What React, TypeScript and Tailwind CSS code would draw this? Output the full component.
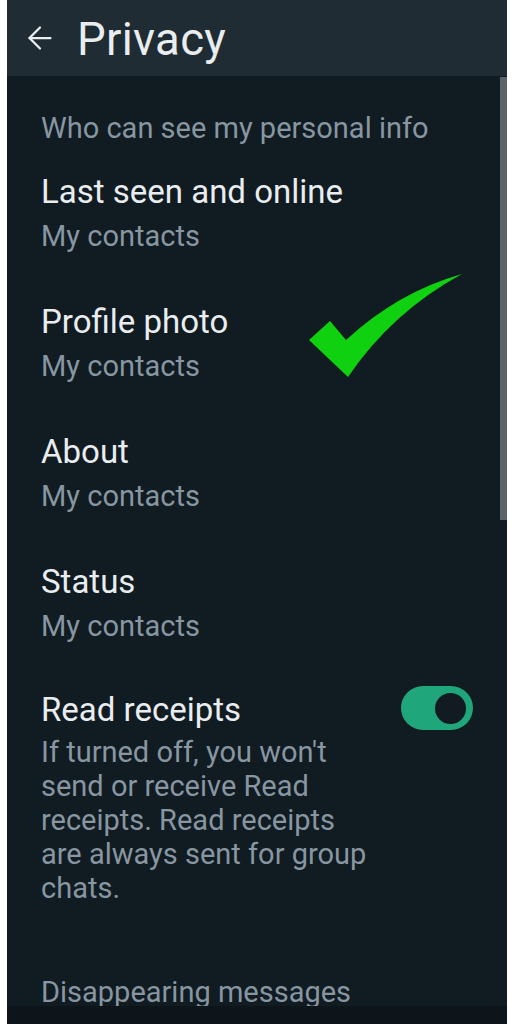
import React from "react";
import { ArrowLeft } from "lucide-react";

const items = [
  { title: "Last seen and online", value: "My contacts" },
  { title: "Profile photo", value: "My contacts" },
  { title: "About", value: "My contacts" },
  { title: "Status", value: "My contacts" },
];

function Toggle() {
  return (
    <div className="w-[72px] h-[44px] rounded-full bg-[#1fa67b] flex items-center justify-end pr-[7px]">
      <div className="w-[31px] h-[31px] rounded-full bg-[#121b22]" />
    </div>
  );
}

function CheckMark() {
  return (
    <svg
      className="absolute left-0 top-0 pointer-events-none"
      width="514"
      height="1024"
      viewBox="0 0 514 1024"
    >
      <path
        d="M309 340 L330 321 L346 340 Q398 292 462 274 Q392 312 348 377 Z"
        fill="#0fd10f"
      />
    </svg>
  );
}

export default function App() {
  return (
    <div
      className="relative w-[514px] h-[1024px] bg-white flex overflow-hidden"
      style={{ fontFamily: "Roboto, 'Noto Sans', sans-serif" }}
    >
      <div className="ml-[7px] w-[500px] h-full bg-[#111b22] flex flex-col">
        <header className="h-[76px] shrink-0 bg-[#202c33] flex items-center">
          <ArrowLeft size={36} strokeWidth={1.5} className="text-[#e9edef] ml-[15px]" />
          <h1 className="ml-[19px] pt-[3px] text-[45.5px] leading-none text-[#e9edef] tracking-[0.3px]">
            Privacy
          </h1>
        </header>

        <div className="relative flex-1 flex flex-col">
          <div className="absolute right-0 top-[1px] w-[7px] h-[443px] bg-[#5b6569]" />

          <p className="pl-[34px] pt-[36px] text-[29px] leading-[32px] text-[#8796a0]">
            Who can see my personal info
          </p>

          <div className="mt-[5px] flex flex-col">
            {items.map((it) => (
              <div key={it.title} className="pl-[34px] py-[21px]">
                <div className="text-[33px] leading-[44px] text-[#e9edef]">{it.title}</div>
                <div className="text-[29px] leading-[44px] text-[#8796a0]">{it.value}</div>
              </div>
            ))}

            <div className="pl-[34px] pr-[34px] pt-[19px] flex items-start justify-between">
              <div>
                <div className="text-[33px] leading-[44px] text-[#e9edef]">Read receipts</div>
                <p className="mt-[3px] text-[29px] leading-[34px] text-[#8796a0]">
                  If turned off, you won't
                  <br />
                  send or receive Read
                  <br />
                  receipts. Read receipts
                  <br />
                  are always sent for group
                  <br />
                  chats.
                </p>
              </div>
              <div className="mt-[-2px]">
                <Toggle />
              </div>
            </div>

            <p className="pl-[34px] mt-[71px] text-[29px] leading-[32px] text-[#8796a0]">
              Disappearing messages
            </p>
          </div>

          <div className="absolute left-0 right-0 bottom-0 h-[18px] bg-[#0d151b]" />
        </div>
      </div>
      <CheckMark />
    </div>
  );
}
